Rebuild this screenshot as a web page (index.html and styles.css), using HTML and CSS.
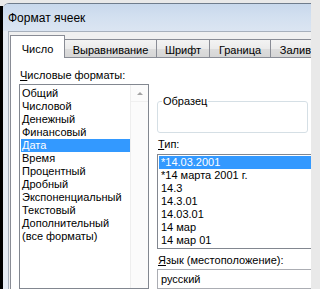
FILE: index.html
```html
<!DOCTYPE html>
<html lang="ru">
<head>
<meta charset="utf-8">
<title>Формат ячеек</title>
<link rel="stylesheet" href="styles.css">
</head>
<body>
<div class="desk">
  <div class="edge"></div>
  <div class="window">
    <div class="titlebar"><span class="title">Формат ячеек</span></div>
    <div class="frame">
      <div class="body">
        <div class="tabs">
          <div class="tab active tab-num">Число</div>
          <div class="tab tab-align">Выравнивание</div>
          <div class="tab tab-font">Шрифт</div>
          <div class="tab tab-border">Граница</div>
          <div class="tab tab-fill">Заливка</div>
        </div>
        <div class="panel">
          <div class="col-left">
            <div class="label"><u>Ч</u>исловые форматы:</div>
            <div class="listbox">
              <ul class="items">
                <li>Общий</li>
                <li>Числовой</li>
                <li>Денежный</li>
                <li>Финансовый</li>
                <li class="selected">Дата</li>
                <li>Время</li>
                <li>Процентный</li>
                <li>Дробный</li>
                <li>Экспоненциальный</li>
                <li>Текстовый</li>
                <li>Дополнительный</li>
                <li>(все форматы)</li>
              </ul>
              <div class="scrollbar">
                <div class="scroll-btn"><span class="arrow-up"></span></div>
              </div>
            </div>
          </div>
          <div class="col-right">
            <fieldset class="sample">
              <legend>Образец</legend>
              <div class="sample-body"></div>
            </fieldset>
            <div class="label label-type"><u>Т</u>ип:</div>
            <ul class="typelist">
              <li class="selected">*14.03.2001</li>
              <li>*14 марта 2001 г.</li>
              <li>14.3</li>
              <li>14.3.01</li>
              <li>14.03.01</li>
              <li>14 мар</li>
              <li>14 мар 01</li>
            </ul>
            <div class="label label-lang"><u>Я</u>зык (местоположение):</div>
            <div class="combo">русский</div>
          </div>
        </div>
      </div>
    </div>
  </div>
</div>
</body>
</html>
```

FILE: styles.css
```css
html, body {
  margin: 0;
  padding: 0;
  width: 311px;
  height: 289px;
  overflow: hidden;
  background: #e9e9e9;
}

body {
  font-family: "Liberation Sans", Arial, sans-serif;
  font-size: 11px;
  color: #000;
}

.desk {
  display: flex;
  width: 311px;
  height: 289px;
  overflow: hidden;
}

.edge {
  width: 3px;
  flex-shrink: 0;
  margin-top: 6px;
  background: #000;
}

.window {
  flex: 1;
  min-width: 0;
  display: flex;
  flex-direction: column;
  margin-top: 3px;
  border-top: 1px solid #6f7c8c;
  border-top-left-radius: 6px;
  background: #dde6f1;
  overflow: hidden;
}

.titlebar {
  height: 27px;
  flex-shrink: 0;
  display: flex;
  align-items: center;
  padding-left: 5px;
  background: linear-gradient(#c8d8ec, #d3e0f0 50%, #dbe5f2);
}

.title {
  font-size: 12px;
  color: #000;
  margin-top: 1px;
}

.frame {
  flex: 1;
  display: flex;
  padding-left: 5px;
  background: #e6ecf4;
}

.body {
  flex: 1;
  display: flex;
  flex-direction: column;
  border-left: 1px solid #a7b0bc;
  border-top: 1px solid #a7b0bc;
  background: #f0f0f0;
}

.tabs {
  display: flex;
  align-items: flex-end;
  padding: 3px 0 0 1px;
  flex-shrink: 0;
}

.tab {
  box-sizing: border-box;
  height: 18px;
  padding-top: 4px;
  line-height: 13px;
  text-align: center;
  white-space: nowrap;
  flex-shrink: 0;
  border: 1px solid #898c95;
  border-bottom: none;
  margin-left: -1px;
  background: linear-gradient(#f3f3f3, #ebebeb 50%, #dddddd 51%, #d6d6d6);
}

.tab.active {
  height: 23px;
  padding-top: 7px;
  margin-left: 0;
  margin-bottom: -1px;
  position: relative;
  z-index: 1;
  background: #fff;
}

.tab-num { width: 55px; }
.tab-align { width: 93px; }
.tab-font { width: 54px; }
.tab-border { width: 62px; }
.tab-fill { width: 62px; }

.panel {
  flex: 1;
  display: flex;
  gap: 8px;
  margin-left: 1px;
  padding: 11px 0 0 8px;
  background: #fff;
  border-left: 1px solid #898c95;
  border-top: 1px solid #898c95;
}

.label {
  line-height: 13px;
  padding-left: 1px;
  white-space: nowrap;
}

.label u {
  text-decoration: underline;
  text-underline-offset: 1px;
}

.col-left {
  width: 130px;
  flex-shrink: 0;
  display: flex;
  flex-direction: column;
}

.listbox {
  margin-top: 2px;
  flex: 1;
  display: flex;
  border: 1px solid #828790;
  padding-left: 1px;
}

.items {
  list-style: none;
  margin: 0;
  padding: 2px 0 0 0;
  flex: 1;
}

.items li,
.typelist li {
  line-height: 13px;
  padding-left: 1px;
  white-space: nowrap;
}

.items li.selected,
.typelist li.selected {
  background: #3399ff;
  color: #fff;
}

.scrollbar {
  width: 17px;
  flex-shrink: 0;
  background: #fbfbfb;
  border-left: 1px solid #eeeeee;
}

.scroll-btn {
  height: 16px;
  display: flex;
  align-items: center;
  justify-content: center;
  border-bottom: 1px solid #f0f0f0;
}

.arrow-up {
  width: 0;
  height: 0;
  border-left: 3px solid transparent;
  border-right: 3px solid transparent;
  border-bottom: 3px solid #a3a3a3;
}

.col-right {
  flex: 1;
  min-width: 0;
  display: flex;
  flex-direction: column;
}

.sample {
  width: 151px;
  box-sizing: border-box;
  margin: 26px 0 0 0;
  padding: 0 0 0 4px;
  border: 1px solid #d5dfe5;
  border-radius: 3px;
}

.sample legend {
  padding: 0 1px;
  line-height: 13px;
}

.sample-body {
  height: 24px;
}

.label-type {
  margin-top: 5px;
}

.typelist {
  list-style: none;
  margin: 3px -20px 0 0;
  padding: 1px 0 1px 1px;
  border: 1px solid #828790;
}

.typelist li {
  padding-left: 2px;
}

.label-lang {
  margin-top: 5px;
}

.combo {
  margin: 2px -20px 0 0;
  height: 18px;
  line-height: 18px;
  padding-left: 3px;
  border: 1px solid #abadb3;
}
```
